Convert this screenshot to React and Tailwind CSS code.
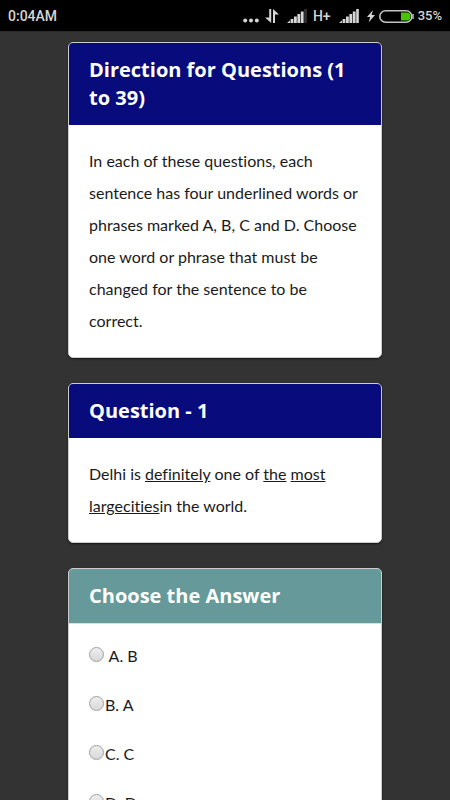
import { useState } from 'react'

const options = [
  { id: 'a', label: ' A. B' },
  { id: 'b', label: 'B. A' },
  { id: 'c', label: 'C. C' },
  { id: 'd', label: 'D. D' },
]

const SignalIcon = ({ full }) => (
  <svg width="20" height="14" viewBox="0 0 20 14" fill="#d6d6d6" aria-hidden="true">
    <path d="M0 14 L3 11.5 V14 Z" />
    <rect x="3.6" y="10" width="2.8" height="4" />
    <rect x="7" y="7.5" width="2.8" height="6.5" />
    <rect x="10.4" y="5" width="2.8" height="9" />
    <rect x="13.8" y="2.5" width="2.8" height="11.5" />
    <rect x="17.2" y="0" width="2.6" height="14" fill={full ? '#d6d6d6' : '#333333'} />
  </svg>
)

const StatusBar = () => (
  <header className="flex h-8 shrink-0 items-center justify-between border-b border-[#2a2a2a] bg-black px-2 pt-px font-['Roboto',sans-serif] text-[14px] leading-4 font-medium text-[#d6d6d6]">
    <span>0:04AM</span>
    <div className="flex items-center">
      <svg className="mr-1.5" width="16" height="14" viewBox="0 0 16 14" fill="#d6d6d6" aria-hidden="true">
        <circle cx="2.2" cy="11.4" r="2" />
        <circle cx="8" cy="11.4" r="2" />
        <circle cx="13.8" cy="11.4" r="2" />
      </svg>
      <svg className="mr-2" width="14" height="14" viewBox="0 0 14 14" fill="#d6d6d6" aria-hidden="true">
        <path d="M4.2 0 H6.2 V14 L0 8.5 H4.2 Z" />
        <path d="M8 0 L14 5.5 H10 V14 H8 Z" />
      </svg>
      <SignalIcon />
      <span className="ml-1.5 mr-2">H+</span>
      <SignalIcon full />
      <svg className="ml-2 mr-1" width="8" height="14" viewBox="0 0 8 14" fill="#d6d6d6" aria-hidden="true">
        <path d="M6 1 L0 8 H3.2 L1.6 13.5 L8 6 H4.6 Z" />
      </svg>
      <svg className="mr-1" width="35" height="13" viewBox="0 0 35 13" aria-hidden="true">
        <rect x="0.8" y="0.8" width="32" height="11.4" rx="5.7" fill="none" stroke="#c4c4c4" strokeWidth="1.6" />
        <path d="M34 4 V9" stroke="#c4c4c4" strokeWidth="1.4" />
        <path d="M22 2.6 H27.6 A3.9 3.9 0 0 1 27.6 10.4 H22 Z" fill="#49c400" />
      </svg>
      <span className="text-[13px]">35%</span>
    </div>
  </header>
)

const Card = ({ title, color, children }) => (
  <section className="overflow-hidden rounded-[5px] border border-[#cccccc] bg-white shadow-[0_1px_2px_rgba(0,0,0,0.6)]">
    <h2
      className={`px-5 py-[13px] font-['Open_Sans','Noto_Sans',sans-serif] text-[20px] leading-7 font-bold text-white ${color}`}
    >
      {title}
    </h2>
    {children}
  </section>
)

const App = () => {
  const [answer, setAnswer] = useState('')

  return (
    <div className="flex h-screen flex-col bg-[#333333]">
      <StatusBar />
      <main className="flex flex-1 flex-col overflow-y-auto px-17 pt-2.5 pb-6 font-['Lato',sans-serif] text-[16px] leading-8 text-[#1a1a1a] [font-variant-ligatures:none] [scrollbar-width:none]">
        <div className="flex flex-col gap-[25px]">
          <Card title="Direction for Questions (1 to 39)" color="bg-[#070b7b]">
            <p className="p-5">
              In each of these questions, each sentence has four underlined words or phrases marked A,
              B, C and D. Choose one word or phrase that must be changed for the sentence to be
              correct.
            </p>
          </Card>

          <Card title="Question - 1" color="bg-[#070b7b]">
            <p className="p-5">
              Delhi is <u>definitely</u> one of <u>the</u> <u>most</u> <u>largecities</u>in the world.
            </p>
          </Card>

          <Card title="Choose the Answer" color="bg-[#669999]">
            <div className="flex flex-col gap-[17px] border-t border-[#dddddd] px-5 py-4">
              {options.map((option) => (
                <div key={option.id} className="flex items-center">
                  <input
                    type="radio"
                    id={option.id}
                    name="answer"
                    value={option.id}
                    checked={answer === option.id}
                    onChange={(e) => setAnswer(e.target.value)}
                    className="mr-px mb-1 size-[15px] appearance-none rounded-full border border-[#a0a0a0] bg-linear-to-b from-[#eeeeee] to-[#d8d8d8] checked:bg-[#666666]"
                  />
                  <label htmlFor={option.id} className="whitespace-pre">
                    {option.label}
                  </label>
                </div>
              ))}
            </div>
          </Card>
        </div>
      </main>
    </div>
  )
}

export default App
